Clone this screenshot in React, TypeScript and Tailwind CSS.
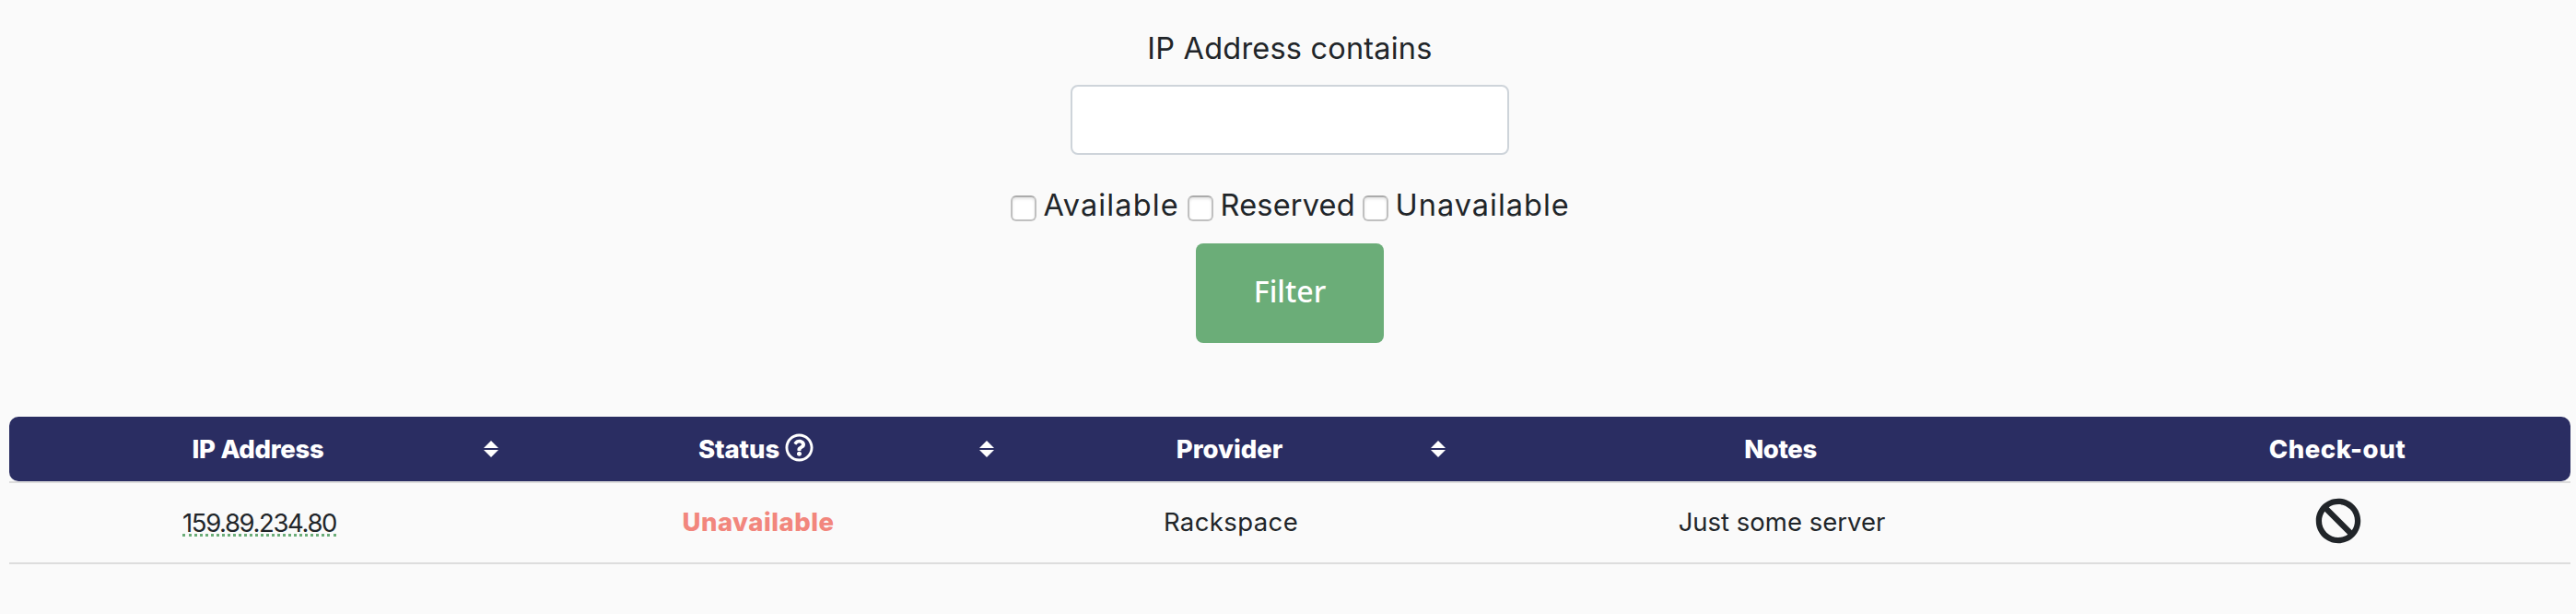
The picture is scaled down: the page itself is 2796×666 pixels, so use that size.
import { FaBan, FaRegQuestionCircle } from "react-icons/fa";

function Sort() {
  return (
    <svg className="absolute top-[26px] right-3 h-[18px] w-4" viewBox="0 0 16 18" fill="#fff">
      <path d="M8 0 16 8H0Z" />
      <path d="M0 10h16L8 18Z" />
    </svg>
  );
}

const columns = [
  { name: "IP Address", sort: true, text: "tracking-[-0.3px]" },
  { name: "Status", sort: true, help: true, text: "tracking-[-0.1px]" },
  { name: "Provider", sort: true, text: "" },
  { name: "Notes", sort: false, text: "tracking-[-0.4px]" },
  { name: "Check-out", sort: false, text: "tracking-[0.6px]" },
];

const grid = "grid grid-cols-[543px_538px_490px_706px_503px]";

function Check({ label, text }: { label: string; text: string }) {
  return (
    <label className="flex items-center">
      <input
        type="checkbox"
        className="mt-[6px] mr-[8px] h-7 w-7 shrink-0 appearance-none rounded-[6px] border-2 border-[#c0c0c0] border-t-[#ababab] bg-white shadow-[inset_0_2px_3px_rgba(0,0,0,0.1)]"
      />
      <span className={text}>{label}</span>
    </label>
  );
}

export default function App() {
  return (
    <main className="min-h-[666px] bg-[#fafafa] font-['Inter',sans-serif] text-[#212529]">
      <form className="flex flex-col items-center pt-7 pl-1 text-[32.5px] leading-[48px]">
        <label htmlFor="ip" className="whitespace-nowrap pt-px tracking-[0.2px]">IP Address contains</label>
        <input id="ip" className="mt-[15px] h-[76px] w-[476px] rounded-lg border-2 border-[#ced4da] bg-white px-6" />
        <div className="mt-[31px] flex h-12">
          <Check label="Available" text="w-[156px] tracking-[1.1px]" />
          <Check label="Reserved" text="w-[154px] tracking-[0.2px]" />
          <Check label="Unavailable" text="w-[189px] tracking-[1px]" />
        </div>
        <button type="button" className="mt-[17px] h-[108px] w-[204px] rounded-lg bg-[#6bad78] pb-1 font-['Noto_Sans',sans-serif] text-[32px] font-medium text-white">
          Filter
        </button>
      </form>
      <section className="mx-[10px] mt-20 w-[2780px] text-center text-[27.5px]">
        <div className="border-b-2 border-[#dddddd]">
          <div className={`${grid} h-[70px] rounded-[10px] bg-[#2a2d62] font-extrabold text-white`}>
            {columns.map((c) => (
              <div key={c.name} className="relative flex items-center justify-center pt-px pr-[3px]">
                <span className={c.text}>{c.name}</span>
                {c.help && <FaRegQuestionCircle className="mb-[5px] ml-[6px] h-[31px] w-[31px]" />}
                {c.sort && <Sort />}
              </div>
            ))}
          </div>
        </div>
        <div className={`${grid} h-[88px] items-center border-b-2 border-[#dddddd]`}>
          <div className="flex justify-center pt-[2px]">
            <span className="border-b-3 border-dotted border-[#6bad78] leading-6 tracking-[-1.4px]">159.89.234.80</span>
          </div>
          <div className="pl-[2px] font-extrabold tracking-[0.5px] text-[#f2867d]">Unavailable</div>
          <div className="tracking-[0.4px]">Rackspace</div>
          <div>Just some server</div>
          <div className="flex justify-center pr-[2px] pb-1">
            <FaBan className="h-[50px] w-[50px]" />
          </div>
        </div>
      </section>
    </main>
  );
}
